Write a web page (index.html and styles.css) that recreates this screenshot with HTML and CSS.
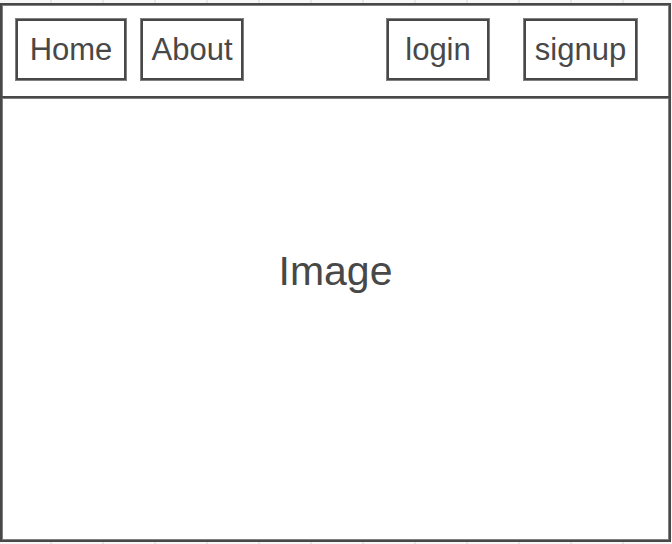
FILE: index.html
```html
<!DOCTYPE html>
<html lang="en">
<head>
<meta charset="utf-8">
<meta name="viewport" content="width=device-width, initial-scale=1">
<title>Home</title>
<link rel="stylesheet" href="styles.css">
</head>
<body>
<div class="frame">
  <header class="header">
    <nav class="links" aria-label="Main">
      <a class="box home" href="#">Home</a>
      <a class="box" href="#">About</a>
    </nav>
    <div class="account">
      <button class="box" type="button">login</button>
      <button class="box signup" type="button">signup</button>
    </div>
  </header>
  <main class="hero">Image</main>
</div>
</body>
</html>
```
FILE: styles.css
```css
* {
  box-sizing: border-box;
}

body {
  display: flex;
  min-height: 100vh;
  margin: 0;
  padding: 3px 1px 2px 0;
  /* canvas grid showing around the frame */
  background: repeating-linear-gradient(to right, #f7f7f8 0 50px, #e6e6e8 50px 52px);
  color: #484848;
  font-family: "Liberation Sans", Arial, sans-serif;
}

.frame {
  display: flex;
  flex: 1;
  flex-direction: column;
  border: 2px solid #484848;
  background: #fff;
  box-shadow: inset 0 0 0 1px #808080;
}

.header {
  display: flex;
  justify-content: space-between;
  padding: 14px 32px 16px 14px;
  border-bottom: 2px solid #484848;
  box-shadow: 0 1px #808080;
}

.links,
.account {
  display: flex;
}

.links {
  gap: 15px;
}

.account {
  gap: 35px;
}

.box {
  display: flex;
  align-items: center;
  justify-content: center;
  width: 102px;
  height: 61px;
  padding: 0;
  border: 2px solid #484848;
  background: #fff;
  box-shadow: 0 0 0 1px #808080;
  color: inherit;
  font: 31px/36px "Liberation Sans", Arial, sans-serif;
  text-decoration: none;
}

.home {
  width: 110px;
}

.signup {
  width: 113px;
}

.hero {
  display: flex;
  flex: 1;
  align-items: center;
  justify-content: center;
  padding-bottom: 96px;
  font-size: 41px;
  line-height: 48px;
}
```
